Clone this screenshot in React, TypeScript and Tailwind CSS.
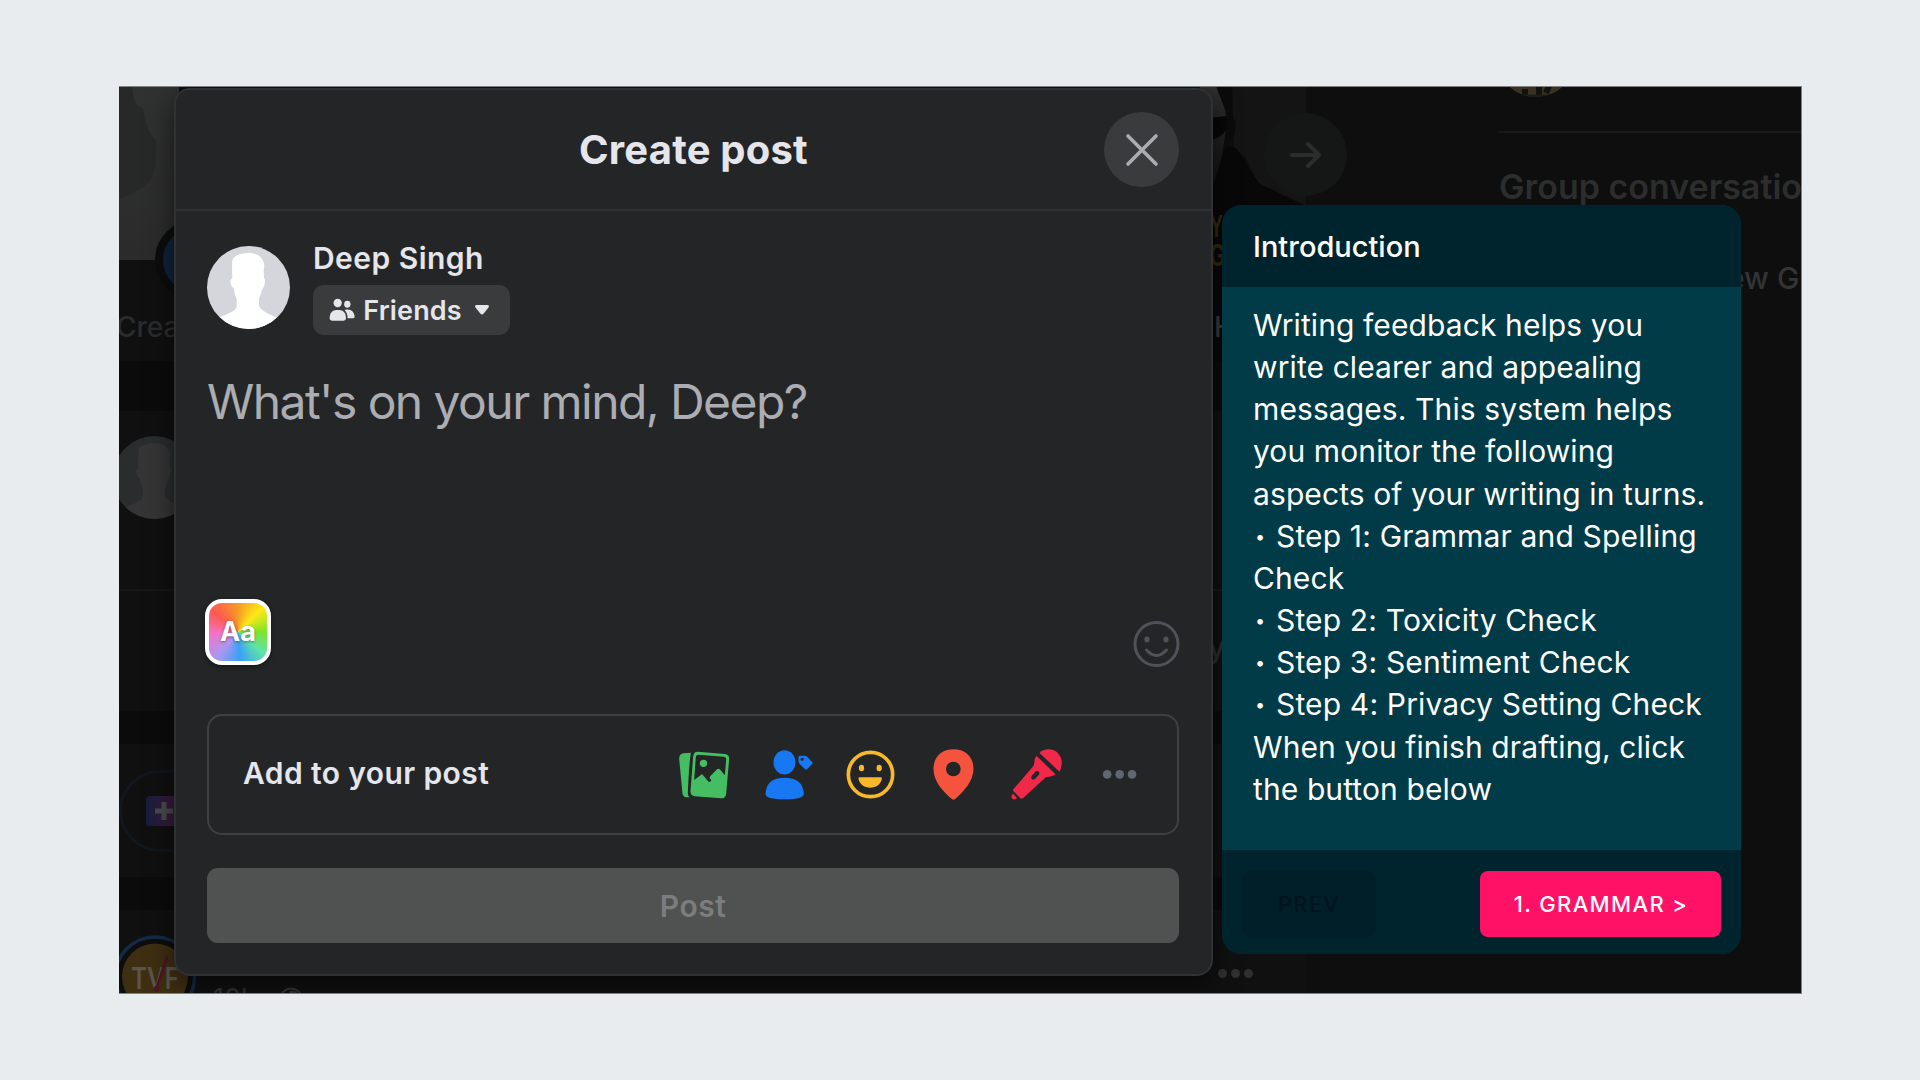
import React from "react";

function Silhouette({ id, back, front, className }: { id: string; back: string; front: string; className: string }) {
  return (
    <svg viewBox="51 78 249 249" className={className}>
      <clipPath id={id}>
        <circle cx="175.5" cy="202.5" r="124.5" />
      </clipPath>
      <g clipPath={`url(#${id})`}>
        <rect x="51" y="78" width="249" height="249" fill={back} />
        <path
          fill={front}
          d="M127 122C130 106 152 99 176 99C203 99 222 112 223 140L221 150L222 174Q226 177 225 184Q224 202 216 208Q213 224 207 236V258Q212 273 262 293V330H88V292Q134 276 140 262V238Q133 222 131 205Q122 200 121 184Q121 176 127 175L126 146Z"
        />
      </g>
    </svg>
  );
}

function FriendsIcon() {
  return (
    <svg viewBox="417 232 79 70" className="h-[23.3px] w-[26.3px]" fill="#e4e6eb">
      <circle cx="443" cy="247" r="12.5" />
      <ellipse cx="472" cy="250.500" rx="9.500" ry="10.500" />
      <path d="M419 293C419 277 427 268 440 268H447C460 268 468 277 468 293Q468 300 461 300H426Q419 300 419 293Z" />
      <path d="M464 268C483 263 493 274 494 288Q494 293 489 293H473C473 283 470 275 464 268Z" />
    </svg>
  );
}

function PhotoIcon() {
  return (
    <svg viewBox="-22.5 13 249 180" className="h-[60px] w-[83px]">
      <path fill="#45bd62" d="M38 41L61 39Q55 80 52 160Q52 170 58 173H51Q38 173 36 162L26 58Q25 44 38 41Z" />
      <path
        fill="#45bd62"
        fillRule="evenodd"
        d="M82 36L163 43Q177 45 176 58L167 162Q165 177 151 176L73 170Q59 168 60 154L68 50Q70 35 82 36ZM84 45Q77 45 76 52L71 121L94 104Q97 105 99 108L113 125Q117 129 121 124Q124 121 117 115L119 110L138 90Q143 85 148 89L163 107L167 60Q168 52 160 51Z"
      />
      <circle cx="99" cy="71" r="11" fill="#45bd62" />
    </svg>
  );
}

function TagPeopleIcon() {
  return (
    <svg viewBox="226.5 13 249 180" className="h-[60px] w-[83px]" fill="#1877f2">
      <ellipse cx="342" cy="68" rx="33" ry="36.500" />
      <path d="M342 114C378 114 399 130 400 163Q400 179 342 179Q285 179 285 163C286 130 306 114 342 114Z" />
      <path fillRule="evenodd" d="M388 48H403Q407 48 410 51L425 67Q427 70 425 73L410 88Q406 91 403 88L387 72Q384 69 384 65V53Q384 48 388 48ZM395 54A4.800 4.800 0 1 0 395 63.600A4.800 4.800 0 1 0 395 54Z" />
    </svg>
  );
}

function FeelingIcon() {
  return (
    <svg viewBox="475.5 13 249 180" className="h-[60px] w-[83px]">
      <circle cx="600" cy="104.500" r="66.500" fill="none" stroke="#f7b928" strokeWidth="11" />
      <ellipse cx="573" cy="85" rx="8" ry="10" fill="#f7b928" />
      <ellipse cx="626" cy="85" rx="8" ry="10" fill="#f7b928" />
      <path fill="#f7b928" d="M567 113H631Q635 113 634 118C630 135 616 144 599 144C582 144 568 135 564 118Q563 113 567 113Z" />
    </svg>
  );
}

function PinIcon() {
  return (
    <svg viewBox="4.5 13 249 180" className="h-[60px] w-[83px]">
      <path
        fill="#f5533d"
        fillRule="evenodd"
        d="M129 29C166 29 189 53 189 87C189 126 158 156 135 177Q129 182 123 177C98 155 69 126 69 87C69 53 92 29 129 29ZM128.500 66A22 22 0 1 0 128.500 110A22 22 0 1 0 128.500 66Z"
      />
    </svg>
  );
}

function MicIcon() {
  return (
    <svg viewBox="253.5 13 249 180" className="h-[60px] w-[83px]" fill="#f02849">
      <path d="M387 40C400 25 430 25 444 42C457 58 456 78 447 96Z" />
      <path
        fillRule="evenodd"
        d="M378 48L435 104Q427 111 408 112Q404 113 401 117L339 174Q333 179 328 174L309 155Q306 151 310 147L368 80Q371 76 371 71Q371 56 378 48ZM383 95Q378 92 374 97L364 108Q360 114 364 118Q369 122 374 117L385 105Q389 99 383 95Z"
      />
      <path d="M308 162L319 174Q318 179 312 179Q303 179 303 171Q303 164 308 162Z" />
    </svg>
  );
}

function MoreIcon() {
  return (
    <svg viewBox="502.5 13 249 180" className="h-[60px] w-[83px]" fill="#606770">
      <circle cx="590" cy="104" r="13" />
      <circle cx="627.500" cy="104" r="13" />
      <circle cx="664.500" cy="104" r="13" />
    </svg>
  );
}

function Feed() {
  return (
    <div className="flex w-[1187px] flex-col">
      <div className="relative h-[275px] shrink-0 overflow-hidden bg-[#101010]">
        <div className="flex h-[174px] justify-between">
          <svg viewBox="0 0 60 174" className="h-[174px] w-[60px]">
            <defs>
              <linearGradient id="story" x1="0" y1="0" x2="0" y2="1">
                <stop offset="0" stopColor="#303131" />
                <stop offset="1" stopColor="#2b2b2b" />
              </linearGradient>
            </defs>
            <rect width="60" height="174" fill="url(#story)" />
            <path d="M0 0H13Q14 20 24 23Q27 45 37 54Q38 90 29 97Q19 106 0 113Z" fill="#272929" />
          </svg>
          <svg viewBox="0 0 106 275" className="h-[275px] w-[106px]">
            <defs>
              <linearGradient id="face" x1="0" y1="0" x2="0" y2="1">
                <stop offset="0" stopColor="#303030" />
                <stop offset="1" stopColor="#101010" />
              </linearGradient>
            </defs>
            <rect width="106" height="275" fill="#0d0d0d" />
            <path d="M28 0H106V120L58 98L46 72L34 62L32 30Z" fill="#141414" />
            <path d="M0 0H18Q25 12 26 30L25 50Q20 84 12 104H0Z" fill="url(#face)" />
            <path d="M16 0H32L33 32L36 36L34 50L28 56L26 26Z" fill="#0b0b0b" />
            <path d="M8 32L27 30V42Q22 53 8 54Z" fill="#070707" />
            <path d="M12 102L26 60L36 62L54 90L60 98L106 120V275H0V120Z" fill="#080808" />
          </svg>
        </div>
        <div className="absolute top-[134px] left-[36px] h-[80px] w-[80px] rounded-full border-[8px] border-[#0c0c0c] bg-[#10233d]" />
        <div className="absolute top-[223px] left-[-3px] text-[28px] leading-[36px] font-medium text-[#2b2c2c]">Create story</div>
        <div className="absolute top-[126px] left-[1091px] font-['Liberation_Sans'] text-[32px] leading-[29px] font-bold text-[#31290d]">
          <div className="origin-left scale-x-[0.6]">Y</div>
          <div className="origin-left scale-x-[0.6]">G</div>
        </div>
        <div className="absolute top-[223px] left-[1095px] text-[28px] leading-[36px] font-medium text-[#3a3a3a]">H</div>
      </div>
      <div className="h-[50px] shrink-0 bg-[#0b0b0b]" />
      <div className="relative h-[300px] shrink-0 bg-[#101010] pt-[25px]">
        <Silhouette id="composer" back="#2a2d2e" front="#353535" className="ml-[-6px] h-[83px] w-[83px]" />
        <div className="mt-[70px] h-[2px] bg-[#171718]" />
        <div className="absolute top-[216px] left-[1089px] text-[30px] leading-[40px] font-medium text-[#2c2d2d]">y</div>
      </div>
      <div className="h-[33px] shrink-0 bg-[#0b0b0b]" />
      <div className="h-[133px] shrink-0 bg-[#101010] pt-[26px]">
        <div className="flex h-[82px] w-[300px] items-center rounded-full border-[3px] border-[#10171f] pl-[24px]">
          <div className="flex h-[30px] w-[36px] items-center rounded-[4px] bg-linear-to-r from-[#161d3c] to-[#44173f] pl-[9px]">
            <svg viewBox="0 0 18 18" className="h-[18px] w-[18px]">
              <path d="M6.500 0H11.500V6.500H18V11.500H11.500V18H6.500V11.500H0V6.500H6.500Z" fill="#4b4b4c" />
            </svg>
          </div>
        </div>
      </div>
      <div className="h-[33px] shrink-0 bg-[#0b0b0b]" />
      <div className="relative h-[84px] shrink-0 overflow-hidden bg-[#101010]">
        <svg viewBox="-8 0 90 84" className="absolute top-0 left-[-8px] h-[84px] w-[90px]">
          <circle cx="36" cy="66.500" r="39.500" fill="#0d0d0d" stroke="#132a47" strokeWidth="3.500" />
          <circle cx="36" cy="66.500" r="33" fill="#3f2f12" />
          <text x="12" y="78.500" fontFamily="Inter" fontWeight="600" fontSize="30" fill="#5a544b" textLength="48" lengthAdjust="spacingAndGlyphs">TVF</text>
          <path d="M37.500 79L48 47" stroke="#4c1722" strokeWidth="3" strokeLinecap="round" />
          <circle cx="37.500" cy="79" r="3" fill="#4c1722" />
        </svg>
        <div className="absolute top-[72px] left-[94px] flex items-center gap-[22px] text-[27px] leading-[34px] text-[#333434]">
          <span>10h</span>
          <svg viewBox="0 0 24 24" className="h-[24px] w-[24px]">
            <circle cx="12" cy="12" r="10.500" fill="none" stroke="#333434" strokeWidth="2" />
            <path d="M11 4Q18 3 20 9L16 12L12 8L7 12Z" fill="#333434" />
          </svg>
        </div>
        <div className="absolute top-[59px] right-[53px] flex gap-[4px]">
          <div className="h-[9px] w-[9px] rounded-full bg-[#303030]" />
          <div className="h-[9px] w-[9px] rounded-full bg-[#303030]" />
          <div className="h-[9px] w-[9px] rounded-full bg-[#303030]" />
        </div>
      </div>
    </div>
  );
}

function Contacts() {
  return (
    <div className="flex-1 overflow-hidden bg-[#0e0e0e] pl-[193px] whitespace-nowrap">
      <div className="h-[47px] border-b-2 border-[#191919]">
        <svg viewBox="0 0 70 14" className="h-[14px] w-[70px]">
          <clipPath id="sun">
            <circle cx="37" cy="-29" r="40" />
          </clipPath>
          <g clipPath="url(#sun)">
            <rect width="70" height="14" fill="#3a3322" />
            <path d="M26 3V9M50 0L47 7M40 0V10" stroke="#131210" strokeWidth="6" />
            <path d="M20 10H56" stroke="#1c1c1b" strokeWidth="3" />
          </g>
        </svg>
      </div>
      <div className="mt-[32px] text-[34px] leading-[44px] font-[560] text-[#2c2d2d]">Group conversations</div>
      <div className="mt-[49px] ml-[42px] text-[30px] leading-[40px] font-medium text-[#333434]">
        <span className="inline-block w-[228px] text-right">Create New</span> Group
      </div>
    </div>
  );
}

function CreatePostModal() {
  return (
    <div className="absolute top-[2px] left-[55px] flex h-[888px] w-[1039px] flex-col rounded-[16px] border-2 border-[#303132] bg-[#242526] shadow-[0_8px_28px_rgba(0,0,0,0.55)]">
      <div className="relative flex h-[121px] shrink-0 items-center justify-center border-b-2 border-[#303132]">
        <h1 className="text-[40px] leading-[50px] font-[650] tracking-[0.2px] text-[#e4e6eb]">Create post</h1>
        <button className="absolute top-[22px] right-[32px] flex h-[75px] w-[75px] items-center justify-center rounded-full bg-[#3a3b3c]">
          <svg viewBox="0 0 34 34" className="h-[34px] w-[34px]">
            <path d="M3 3L31 31M31 3L3 31" stroke="#a9acb1" strokeWidth="3.600" strokeLinecap="round" />
          </svg>
        </button>
      </div>
      <div className="flex flex-col pr-[32px] pl-[31px]">
        <div className="flex pt-[30px]">
          <Silhouette id="author" back="#d5d6dc" front="#ffffff" className="mt-[5px] h-[83px] w-[83px] shrink-0" />
          <div className="ml-[23px] flex flex-col items-start">
            <div className="text-[30px] leading-[34px] font-[560] tracking-[0.45px] text-[#e4e6eb]">Deep Singh</div>
            <button className="mt-[10px] flex h-[50px] w-[197px] items-center rounded-[11px] bg-[#3a3b3c] pl-[16px]">
              <FriendsIcon />
              <span className="mt-[1px] ml-[8px] text-[27px] leading-[34px] font-[560] tracking-[0.15px] text-[#e4e6eb]">Friends</span>
              <svg viewBox="0 0 16 12" className="ml-[12px] h-[12px] w-[16px]">
                <path d="M2.500 1H13.500Q16 1.500 14.300 3.800L9.500 9.800Q8 11.300 6.500 9.800L1.700 3.800Q0 1.500 2.500 1Z" fill="#e4e6eb" />
              </svg>
            </button>
          </div>
        </div>
        <div className="mt-[38px] text-[48px] leading-[58px] tracking-[-1.56px] text-[#abadb3]">What's on your mind, Deep?</div>
        <div className="mt-[168px] flex items-start justify-between">
          <div className="ml-[-2px] flex h-[66px] w-[66px] items-center justify-center rounded-[17px] border-4 border-white bg-[conic-gradient(from_0deg,#f59a23,#ffe815_45deg,#7be52a_90deg,#5fe3a8_130deg,#3aa0f5_175deg,#a998f0_220deg,#f472c8_265deg,#ff5a52_310deg,#f59a23)] shadow-[0_2px_5px_rgba(0,0,0,0.4)]">
            <span className="text-[27px] leading-[30px] font-bold text-white [text-shadow:0_1px_3px_rgba(0,0,0,0.4)]">Aa</span>
          </div>
          <svg viewBox="0 0 48 48" className="mt-[21px] mr-[-1px] h-[48px] w-[48px]" fill="none" stroke="#4e5359" strokeWidth="3">
            <circle cx="24.500" cy="24" r="21.500" />
            <path d="M14.500 30Q24.500 41 34.500 30" strokeLinecap="round" />
            <ellipse cx="15" cy="19.500" rx="2.600" ry="3" fill="#4e5359" stroke="none" />
            <ellipse cx="34" cy="19.500" rx="2.600" ry="3" fill="#4e5359" stroke="none" />
          </svg>
        </div>
        <div className="mt-[46px] flex h-[121px] items-center rounded-[15px] border-2 border-[#3e4042] pr-[16px] pb-[2px] pl-[34px]">
          <div className="flex-1 pb-[2px] text-[30px] leading-[36px] font-[560] tracking-[0.4px] text-[#e4e6eb]">Add to your post</div>
          <PhotoIcon />
          <TagPeopleIcon />
          <FeelingIcon />
          <PinIcon />
          <MicIcon />
          <MoreIcon />
        </div>
        <button className="mt-[33px] flex h-[75px] items-center justify-center rounded-[11px] bg-[#505151] text-[30px] leading-[36px] font-[560] tracking-[0.5px] text-[#7b7d7f]">Post</button>
      </div>
    </div>
  );
}

const introLines = [
  "Writing feedback helps you",
  "write clearer and appealing",
  "messages. This system helps",
  "you monitor the following",
  "aspects of your writing in turns.",
  "• Step 1: Grammar and Spelling",
  "Check",
  "• Step 2: Toxicity Check",
  "• Step 3: Sentiment Check",
  "• Step 4: Privacy Setting Check",
  "When you finish drafting, click",
  "the button below",
];

function FeedbackCard() {
  return (
    <div className="absolute top-[119px] left-[1103px] flex h-[749px] w-[519px] flex-col overflow-hidden rounded-[20px] bg-[#003b47] text-white">
      <div className="flex h-[82px] shrink-0 items-center bg-[#00242e] pl-[31px]">
        <h2 className="mt-[1px] text-[29px] leading-[36px] font-medium">Introduction</h2>
      </div>
      <div className="flex-1 pt-[17px] pl-[31px] text-[30px] leading-[42.15px] tracking-[0.1px] whitespace-nowrap">
        {introLines.map((line) =>
          line.startsWith("•") ? (
            <div key={line} className="flex">
              <span className="w-[23px] origin-left translate-x-[2px] scale-[0.6]">•</span>
              <span className="tracking-[0.16px]">{line.slice(2)}</span>
            </div>
          ) : (
            <div key={line}>{line}</div>
          ),
        )}
      </div>
      <div className="flex h-[104px] shrink-0 justify-between bg-[#00242e] pt-[21px] pr-[20px] pl-[20px] text-[22px] leading-[30px] font-medium">
        <button className="h-[66px] w-[134px] rounded-[8px] bg-[#001f29] tracking-[1.2px] text-[#00151d]">PREV</button>
        <button className="h-[66px] w-[241px] rounded-[8px] bg-[#ff1266] pl-[1px] tracking-[1.35px]">1. GRAMMAR &gt;</button>
      </div>
    </div>
  );
}

export default function App() {
  return (
    <div className="h-[1080px] w-full overflow-hidden bg-[#e8ecef] pt-[86px] pl-[119px] font-['Inter',sans-serif]">
      <div className="relative flex h-[908px] w-[1683px] overflow-hidden bg-[#0e0e0e]">
        <Feed />
        <Contacts />
        <div className="absolute top-[27px] left-[1145px] flex h-[83px] w-[83px] items-center justify-center rounded-full bg-[#151716]">
          <svg viewBox="0 0 32 28" className="h-[28px] w-[32px]" fill="none" stroke="#2b2c2c" strokeWidth="4" strokeLinecap="round" strokeLinejoin="round">
            <path d="M2 14H28M18 3L29 14L18 25" />
          </svg>
        </div>
        <CreatePostModal />
        <FeedbackCard />
        <div className="absolute inset-0 border-y border-r border-[#7f8182]" />
      </div>
    </div>
  );
}
